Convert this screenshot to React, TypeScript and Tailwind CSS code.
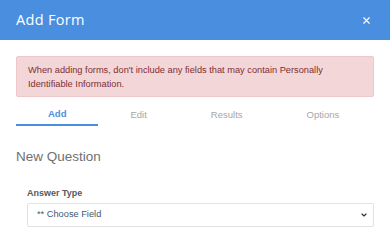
import { X, ChevronDown } from 'lucide-react';

const tabs = ['Add', 'Edit', 'Results', 'Options'];

export default function App() {
  return (
    <div className="w-[390px] h-[252px] bg-white overflow-hidden font-['Liberation_Sans',Arial,sans-serif]">
      {/* header */}
      <header className="h-10 bg-[#4a8ee0] flex items-center justify-between pl-4 pr-[18px]">
        <h1 className="text-[14.5px] font-['Open_Sans',sans-serif] text-white tracking-[0.3px]">Add Form</h1>
        <X size={11} strokeWidth={2.5} className="text-white" />
      </header>

      <div className="px-4 pt-4">
        {/* PII warning */}
        <div className="bg-[#f3d6d8] border border-[#efc6ca] rounded-[2px] px-[11px] py-[6px] text-[9.25px] leading-[14px] text-[#7e2f34] h-[41px]">
          When adding forms, don't include any fields that may contain Personally Identifiable Information.
        </div>

        {/* tabs */}
        <nav className="flex mt-[8px] text-[9.5px]">
          {tabs.map((t, i) => (
            <div
              key={t}
              className={`h-[21px] px-[32px] flex items-center justify-center ${
                i === 0 ? 'text-[#4a8ee0] font-bold border-b-2 border-[#4a8ee0]' : 'text-[#a6a6a6]'
              }`}
            >
              {t}
            </div>
          ))}
        </nav>

        <h2 className="mt-[21px] text-[13.5px] leading-[20px] text-[#707070]">New Question</h2>

        {/* answer type */}
        <div className="w-[347px] ml-[11px] mt-[20px]">
          <label className="block text-[9px] leading-[12px] font-bold text-[#5a5a5a] mb-[4px]">Answer Type</label>
          <div className="w-[347px] h-[24px] border border-[#e2e2e2] rounded-[2px] flex items-center justify-between pl-[9px] pr-[5px]">
            <span className="text-[9.25px] text-[#3e5a70]">** Choose Field</span>
            <ChevronDown size={8} strokeWidth={3.5} className="text-[#333]" />
          </div>
        </div>
      </div>
    </div>
  );
}
